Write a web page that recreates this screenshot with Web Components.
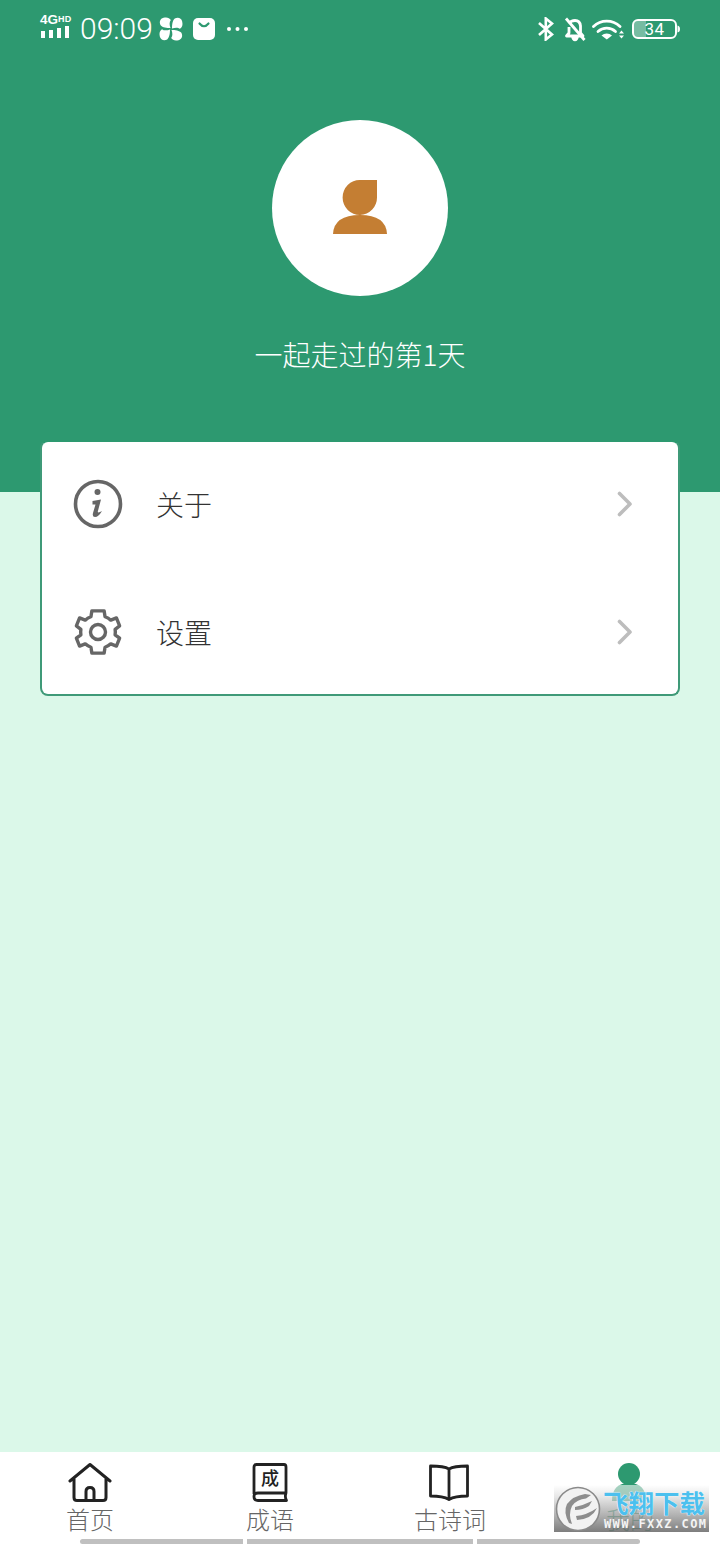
<!DOCTYPE html>
<html lang="zh">
<head>
<meta charset="utf-8">
<title>我的</title>
<style>
  html, body { margin: 0; padding: 0; }
  body {
    width: 720px;
    height: 1544px;
    overflow: hidden;
    font-family: "Noto Sans CJK SC", "Noto Sans", sans-serif;
  }
</style>
</head>
<body>
<app-shell>
  <status-bar slot="status"></status-bar>
  <profile-head slot="head" message="一起走过的第1天"></profile-head>
  <menu-card slot="card">
    <menu-row label="关于">
      <svg slot="icon" width="50" height="50" viewBox="0 0 50 50">
        <circle cx="25" cy="25" r="22.5" fill="none" stroke="#666" stroke-width="3.6"/>
        <circle cx="24.5" cy="13" r="3" fill="#666"/>
        <path d="M19.5 22 L28 20.5 L24.8 32.5 Q24.6 34 27 33 L29 32 Q25.5 38 22 38 Q19 38 20 34 L22.5 25.5 L19.5 25.5 Z" fill="#666"/>
      </svg>
    </menu-row>
    <menu-row label="设置">
      <svg slot="icon" width="50" height="50" viewBox="0 0 50 50">
        <g transform="translate(25 25) scale(.94) translate(-25 -25)">
          <path fill="none" stroke="#666" stroke-width="3.6" stroke-linejoin="round" d="M18.5 2.5 H31.5 L32.5 8.8 Q36 10 38.6 12.4 L44.6 10 L48 18.5 L43.2 22.2 Q43.7 25 43.2 28 L48 31.6 L44.6 40 L38.6 37.6 Q36 40 32.5 41.2 L31.5 47.5 H18.5 L17.5 41.2 Q14 40 11.4 37.6 L5.4 40 L2 31.6 L6.8 28 Q6.3 25 6.8 22.2 L2 18.5 L5.4 10 L11.4 12.4 Q14 10 17.5 8.8 Z"/>
          <circle cx="25" cy="25" r="8" fill="none" stroke="#666" stroke-width="3.6"/>
        </g>
      </svg>
    </menu-row>
  </menu-card>
  <tab-bar slot="tabs">
    <tab-item label="首页">
      <svg slot="icon" width="44" height="40" viewBox="0 0 44 40">
        <path d="M2 18 L22 1.5 L42 18 M6 16 V34.5 Q6 37.5 9 37.5 H35 Q38 37.5 38 34.5 V16" fill="none" stroke="#222" stroke-width="3" stroke-linecap="round" stroke-linejoin="round"/>
        <path d="M18 37 V28.5 Q18 24.5 22 24.5 Q26 24.5 26 28.5 V37" fill="none" stroke="#222" stroke-width="3"/>
      </svg>
    </tab-item>
    <tab-item label="成语">
      <svg slot="icon" width="44" height="40" viewBox="0 0 44 40">
        <path d="M6 31 V4 Q6 1.5 8.5 1.5 H36 Q38 1.5 38 4 V30 H10 Q6 30 6 33.5 Q6 37.5 10 37.5 H38.5 Q36.5 34 38 30" fill="none" stroke="#222" stroke-width="2.8" stroke-linejoin="round"/>
        <text x="22" y="21.5" font-size="18" font-weight="500" text-anchor="middle" fill="#222" font-family="'Noto Sans CJK SC', sans-serif">成</text>
      </svg>
    </tab-item>
    <tab-item label="古诗词">
      <svg slot="icon" width="44" height="40" viewBox="0 0 44 40">
        <path d="M21 6 Q16 3 2.5 3 V33 Q15 33 21 36.5 Q27 33 39.5 33 V3 Q26 3 21 6 Z M21 6 V36" fill="none" stroke="#222" stroke-width="2.8" stroke-linejoin="round"/>
      </svg>
    </tab-item>
    <tab-item label="我的" active>
      <svg slot="icon" width="44" height="40" viewBox="0 0 44 40">
        <circle cx="21" cy="11" r="11" fill="#2d9970"/>
        <path d="M4 38 Q4 20 21 20 Q38 20 38 38 Z" fill="#2d9970"/>
      </svg>
    </tab-item>
    <gesture-bars slot="after"></gesture-bars>
  </tab-bar>
  <site-badge slot="overlay"></site-badge>
</app-shell>

<script>
class AppShell extends HTMLElement {
  constructor() {
    super();
    this.attachShadow({ mode: "open" });
    this.shadowRoot.innerHTML = `
    <style>
      :host {
        display: flex;
        flex-direction: column;
        position: relative;
        width: 720px;
        height: 1544px;
        background: #dbf8e9;
        overflow: hidden;
      }
      .top { background: #2d9970; height: 492px; flex: none; }
      .main { flex: 1; padding: 0 40px; margin-top: -52px; }
    </style>
    <div class="top">
      <slot name="status"></slot>
      <slot name="head"></slot>
    </div>
    <div class="main"><slot name="card"></slot></div>
    <slot name="tabs"></slot>
    <slot name="overlay"></slot>
    `;
  }
}

class StatusBar extends HTMLElement {
  constructor() {
    super();
    this.attachShadow({ mode: "open" });
    this.shadowRoot.innerHTML = `
    <style>
      :host {
        display: flex;
        justify-content: space-between;
        align-items: center;
        box-sizing: border-box;
        height: 58px;
        padding: 0 40px;
        color: #fff;
        font-family: Roboto, "Liberation Sans", sans-serif;
      }
      .group { display: flex; align-items: center; }
      .net { display: flex; flex-direction: column; width: 30px; margin: 0 10px 6px 0; }
      .net b { font: 700 13.5px/11px "Liberation Sans", sans-serif; white-space: nowrap; }
      .net b small { font-size: 9px; vertical-align: 2px; letter-spacing: 0.3px; }
      .net svg { margin-top: 1px; }
      .time { font-size: 30px; font-weight: 300; line-height: 34px; width: 72px; margin-right: 7px; }
      .fan { margin-right: 10px; }
      .bag { margin-right: 11px; }
      svg { display: block; }
      .bt { margin-right: 10px; }
      .bell { margin-right: 6px; }
      .wifi { margin-right: 7px; }
      .batt { position: relative; width: 48px; height: 20px; }
      .batt span {
        position: absolute;
        left: 0; right: 3px; top: 0; bottom: 0;
        text-align: center;
        font-size: 17px;
        line-height: 20px;
        letter-spacing: 0.5px;
      }
    </style>
    <div class="group">
      <div class="net">
        <b>4G<small>HD</small></b>
        <svg width="30" height="12" viewBox="0 0 30 12" fill="#fff">
          <rect x="1" y="5" width="4" height="7"/>
          <rect x="9" y="4" width="4" height="8"/>
          <rect x="17" y="2" width="4" height="10"/>
          <rect x="25" y="0" width="4" height="12"/>
        </svg>
      </div>
      <span class="time">09:09</span>
      <svg class="fan" width="24" height="24" viewBox="0 0 24 24" fill="#fff">
        <path d="M11.5 11 C8 11 3.5 10.5 1.6 8.2 C0 5.2 1 1.6 4.5 .8 C8 0 10.5 .8 11.8 3 C10.2 5 10.4 8 11.5 11 Z"/>
        <path transform="rotate(90 12 12)" d="M11.5 11 C8 11 3.5 10.5 1.6 8.2 C0 5.2 1 1.6 4.5 .8 C8 0 10.5 .8 11.8 3 C10.2 5 10.4 8 11.5 11 Z"/>
        <path transform="rotate(180 12 12)" d="M11.5 11 C8 11 3.5 10.5 1.6 8.2 C0 5.2 1 1.6 4.5 .8 C8 0 10.5 .8 11.8 3 C10.2 5 10.4 8 11.5 11 Z"/>
        <path transform="rotate(270 12 12)" d="M11.5 11 C8 11 3.5 10.5 1.6 8.2 C0 5.2 1 1.6 4.5 .8 C8 0 10.5 .8 11.8 3 C10.2 5 10.4 8 11.5 11 Z"/>
      </svg>
      <svg class="bag" width="22" height="22" viewBox="0 0 22 22">
        <rect width="22" height="22" rx="5" fill="#fff"/>
        <path d="M6.5 5.5 Q11 11 15.5 5.5" fill="none" stroke="#2d9970" stroke-width="2.2" stroke-linecap="round"/>
      </svg>
      <svg width="23" height="6" viewBox="0 0 23 6" fill="#fff">
        <circle cx="3" cy="3" r="2"/><circle cx="11.5" cy="3" r="2"/><circle cx="20" cy="3" r="2"/>
      </svg>
    </div>
    <div class="group">
      <svg class="bt" width="16" height="24" viewBox="0 0 16 24" fill="none" stroke="#fff" stroke-width="2.6">
        <path d="M1 6 L14 17.5 L7.8 22.5 V1.5 L14 6.5 L1 18"/>
      </svg>
      <svg class="bell" width="22" height="25" viewBox="0 0 22 25" fill="none" stroke="#fff" stroke-width="2.8" stroke-linejoin="round">
        <path d="M5 6.5 Q7 3.5 11 3.5 Q16 3.5 16.5 9 V16 L19 19 H2.5 L5 16 V10"/>
        <path d="M8 20 Q8.5 23.5 11 23.5 Q13.5 23.5 14 20" fill="#fff" stroke-width="1.5"/>
        <path d="M2 1.5 L20.5 23"/>
      </svg>
      <svg class="wifi" width="33" height="22" viewBox="0 0 33 22" fill="none" stroke="#fff" stroke-width="2.8" stroke-linecap="round">
        <path d="M1.5 8.5 A19 19 0 0 1 28 8.5"/>
        <path d="M6 13.5 A13 13 0 0 1 23.5 13.5"/>
        <path d="M9.5 17.5 A8 8 0 0 1 20 17.5 L14.8 21.5 Z" fill="#fff" stroke="none"/>
        <path d="M29.5 12.5 L27 15.5 H32 Z M27 17.5 H32 L29.5 20.5 Z" fill="#fff" stroke="none"/>
      </svg>
      <div class="batt">
        <svg width="48" height="20" viewBox="0 0 48 20">
          <path d="M4 2 H14 V18 H4 Q1.5 18 1.5 15 V5 Q1.5 2 4 2 Z" fill="#fff" fill-opacity="0.35"/>
          <rect x="1" y="1" width="43" height="18" rx="5" fill="none" stroke="#fff" stroke-width="2"/>
          <path d="M45.5 6.5 Q48 7 48 10 Q48 13 45.5 13.5 Z" fill="#fff"/>
        </svg>
        <span>34</span>
      </div>
    </div>
    `;
  }
}

class ProfileHead extends HTMLElement {
  constructor() {
    super();
    this.attachShadow({ mode: "open" });
  }

  connectedCallback() {
    this.shadowRoot.innerHTML = `
    <style>
      :host {
        display: flex;
        flex-direction: column;
        align-items: center;
        padding-top: 62px;
      }
      .avatar {
        width: 176px;
        height: 176px;
        border-radius: 50%;
        background: #fff;
        display: flex;
        align-items: center;
        justify-content: center;
      }
      svg { display: block; margin-top: -2px; }
      p {
        margin: 38px 0 0;
        color: #fff;
        font-size: 28px;
        line-height: 40px;
        font-weight: 300;
        white-space: nowrap;
      }
    </style>
    <div class="avatar">
      <svg width="54" height="54" viewBox="0 0 54 54" fill="#c47e33">
        <path d="M27 0 H44 V17 A17.2 17.5 0 1 1 27 0 Z"/>
        <path d="M0 54 Q1 35 27 35 Q53 35 54 54 Z"/>
      </svg>
    </div>
    <p>${this.getAttribute("message")}</p>
    `;
  }
}

class MenuCard extends HTMLElement {
  constructor() {
    super();
    this.attachShadow({ mode: "open" });
    this.shadowRoot.innerHTML = `
    <style>
      :host {
        display: flex;
        flex-direction: column;
        gap: 4px;
        box-sizing: border-box;
        height: 256px;
        background: #fff;
        border: 2px solid #3f9a78;
        border-top-color: #2d9970;
        border-radius: 8px;
      }
    </style>
    <slot></slot>
    `;
  }
}

class MenuRow extends HTMLElement {
  constructor() {
    super();
    this.attachShadow({ mode: "open" });
  }

  connectedCallback() {
    this.shadowRoot.innerHTML = `
    <style>
      :host {
        display: flex;
        align-items: center;
        height: 124px;
        padding: 0 45px 0 31px;
        color: #333;
      }
      .icon { width: 50px; height: 50px; margin-right: 33px; }
      ::slotted(svg) { display: block; }
      .label { flex: 1; font-size: 28px; font-weight: 300; line-height: 40px; }
      .chev { display: block; }
    </style>
    <div class="icon"><slot name="icon"></slot></div>
    <span class="label">${this.getAttribute("label")}</span>
    <svg class="chev" width="16" height="26" viewBox="0 0 16 26" fill="none" stroke="#bdbdbd" stroke-width="3.6" stroke-linecap="round" stroke-linejoin="round">
      <path d="M2.5 2.5 L13 13 L2.5 23.5"/>
    </svg>
    `;
  }
}

class TabBar extends HTMLElement {
  constructor() {
    super();
    this.attachShadow({ mode: "open" });
    this.shadowRoot.innerHTML = `
    <style>
      :host {
        display: block;
        flex: none;
        height: 92px;
        background: #fff;
      }
      .items { display: grid; grid-template-columns: repeat(4, 180px); height: 87px; }
    </style>
    <div class="items"><slot></slot></div>
    <slot name="after"></slot>
    `;
  }
}

class TabItem extends HTMLElement {
  constructor() {
    super();
    this.attachShadow({ mode: "open" });
  }

  connectedCallback() {
    const color = this.hasAttribute("active") ? "#2d9970" : "#666";
    this.shadowRoot.innerHTML = `
    <style>
      :host {
        display: flex;
        flex-direction: column;
        align-items: center;
        padding-top: 11px;
      }
      .icon { height: 40px; }
      ::slotted(svg) { display: block; }
      span { color: ${color}; font-size: 24px; line-height: 34px; font-weight: 300; margin-top: -1px; }
    </style>
    <div class="icon"><slot name="icon"></slot></div>
    <span>${this.getAttribute("label")}</span>
    `;
  }
}

class GestureBars extends HTMLElement {
  constructor() {
    super();
    this.attachShadow({ mode: "open" });
    this.shadowRoot.innerHTML = `
    <style>
      :host {
        display: flex;
        gap: 4px;
        height: 5px;
        padding: 0 80px;
      }
      i { display: block; background: #c0c0c0; }
      i:nth-of-type(1) { width: 163px; border-radius: 3px 0 0 3px; }
      i:nth-of-type(2) { width: 226px; }
      i:nth-of-type(3) { width: 163px; border-radius: 0 3px 3px 0; }
    </style>
    <i></i><i></i><i></i>
    `;
  }
}

class SiteBadge extends HTMLElement {
  constructor() {
    super();
    this.attachShadow({ mode: "open" });
    this.shadowRoot.innerHTML = `
    <style>
      :host {
        position: absolute;
        left: 554px;
        top: 1485px;
        width: 155px;
        height: 47px;
        background: linear-gradient(#ffffff90, #dcdcdcb0 25%, #a0a0a0c8 62%, #6c6c6ce0 100%);
      }
      svg { position: absolute; left: 1px; top: 1px; }
      .name {
        position: absolute;
        left: 49px;
        top: 1px;
        font: 700 25.5px/32px "Noto Sans CJK SC", sans-serif;
        color: #4cc0ee;
        white-space: nowrap;
        text-shadow: 0 0 1px #fff, 0 0 1px #fff;
      }
      .url {
        position: absolute;
        left: 50px;
        top: 32px;
        font: 700 12px/14px "DejaVu Sans Mono", monospace;
        letter-spacing: 1.4px;
        color: #f4f4f4;
        white-space: nowrap;
      }
    </style>
    <svg width="46" height="46" viewBox="0 0 46 46" fill="none">
      <circle cx="23" cy="23" r="21.5" fill="#f2f2f2" stroke="#8a8a8a" stroke-width="1.6"/>
      <path d="M14 37 Q8 26 12 18 Q18 10 30 8 L36 9 L31 12.5 Q22 13 17 20 Q13 28 17 38 Z" fill="#8d8d8d"/>
      <path d="M20 21 Q29 19 37 15 L34 20 Q28 24 20 24 Z M21 30 Q32 29 42 22 Q37 33 22 34 Z" fill="#8d8d8d"/>
    </svg>
    <span class="name">飞翔下载</span>
    <span class="url">WWW.FXXZ.COM</span>
    `;
  }
}

customElements.define("app-shell", AppShell);
customElements.define("status-bar", StatusBar);
customElements.define("profile-head", ProfileHead);
customElements.define("menu-card", MenuCard);
customElements.define("menu-row", MenuRow);
customElements.define("tab-bar", TabBar);
customElements.define("tab-item", TabItem);
customElements.define("gesture-bars", GestureBars);
customElements.define("site-badge", SiteBadge);
</script>
</body>
</html>
